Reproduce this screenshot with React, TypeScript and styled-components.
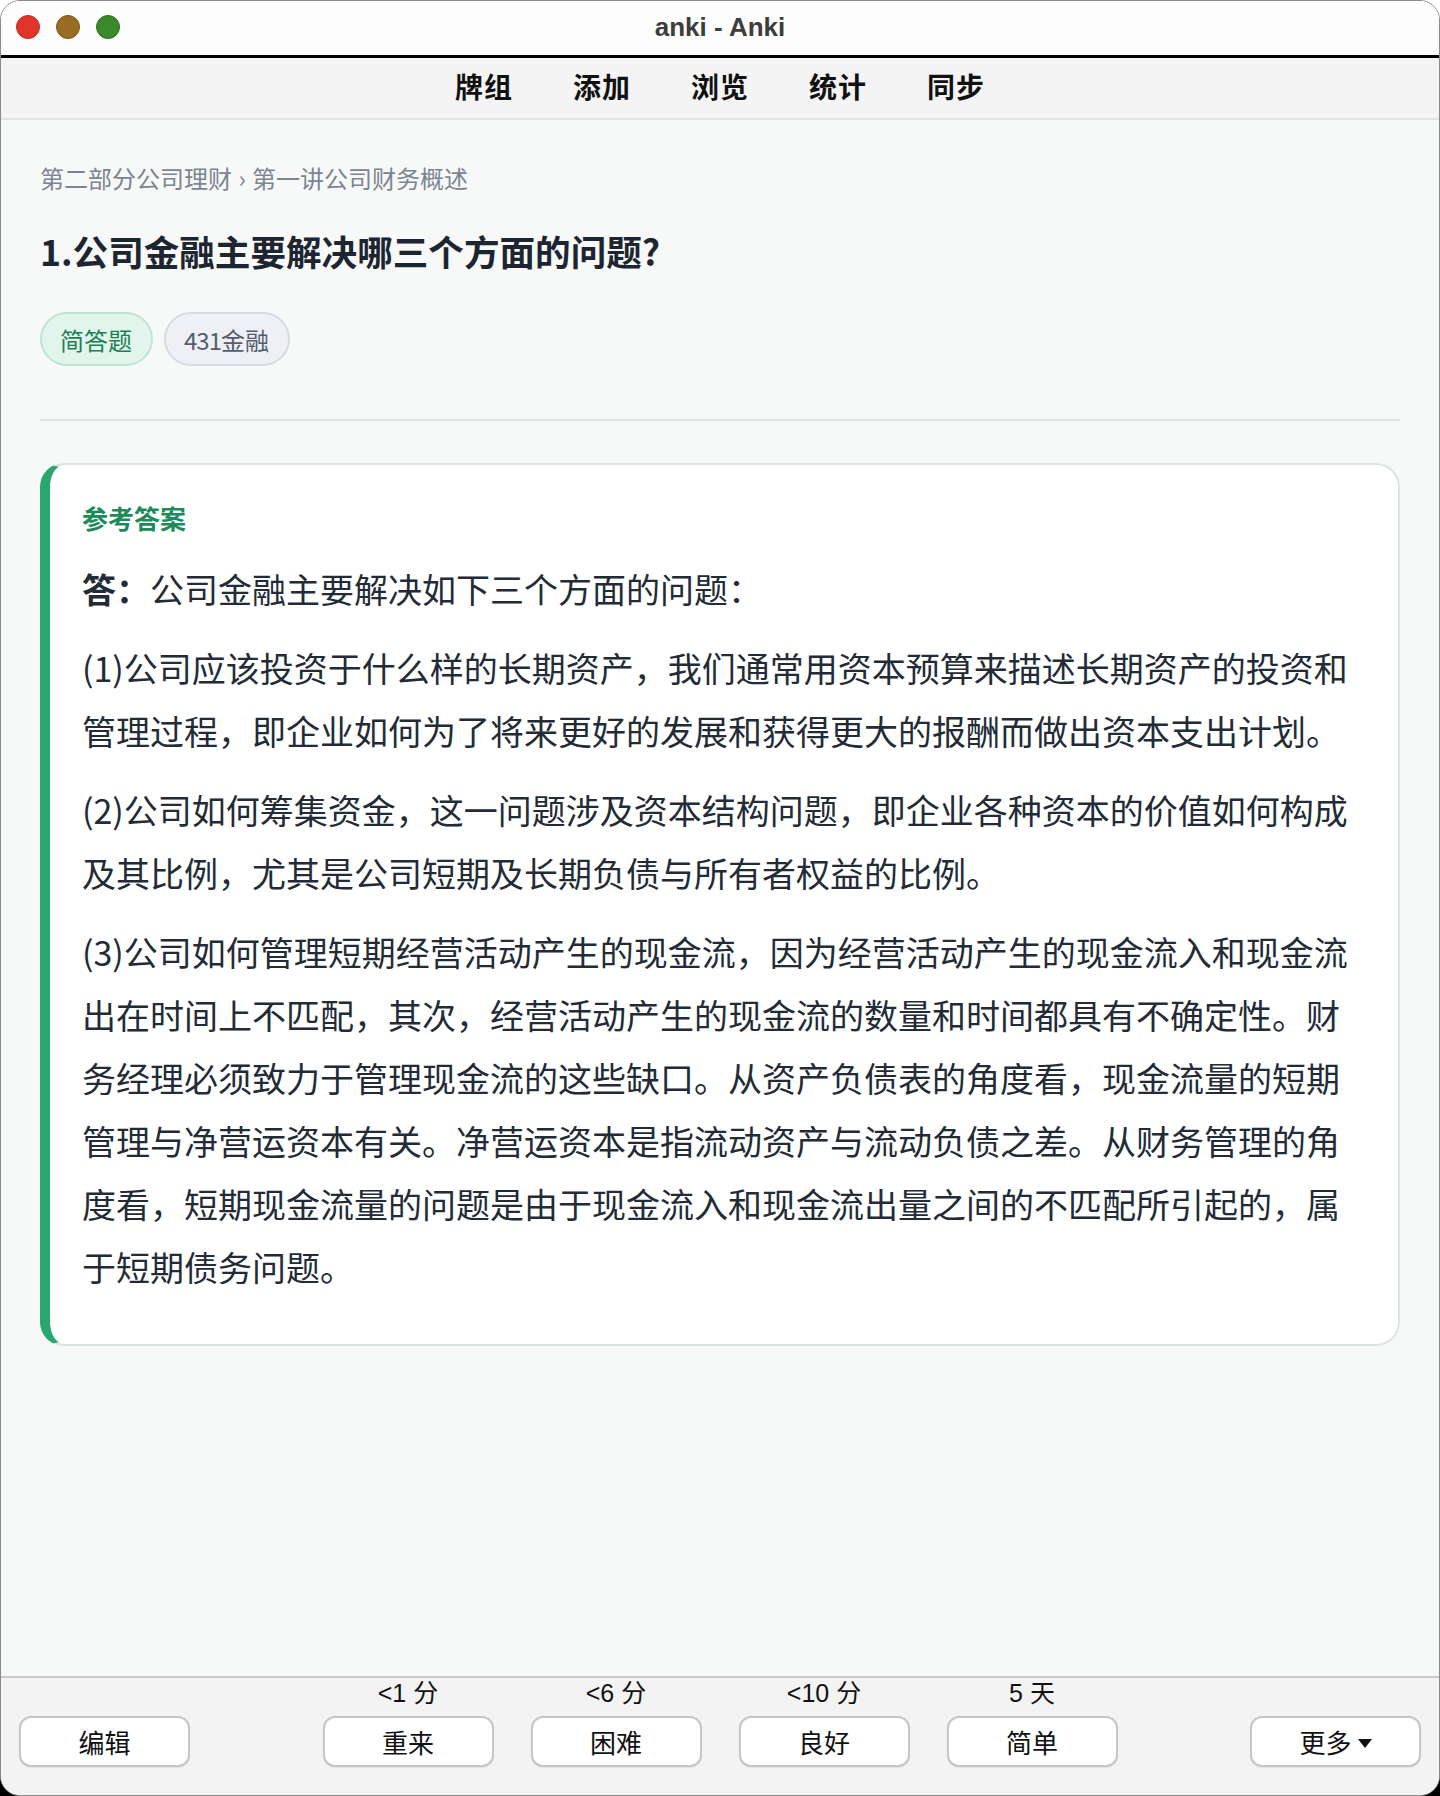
import React from 'react';
import styled, { createGlobalStyle } from 'styled-components';

const GlobalStyle = createGlobalStyle`
  html, body {
    margin: 0;
    padding: 0;
  }
  body {
    background: linear-gradient(to bottom, #ffffff 50%, #000000 50%);
    font-family: 'Noto Sans CJK SC', 'Noto Sans', sans-serif;
  }
  * {
    box-sizing: border-box;
  }
`;

const Window = styled.div`
  display: flex;
  flex-direction: column;
  height: 100vh;
  min-height: 1796px;
  border-radius: 20px;
  overflow: hidden;
  background: #f7f8f8;
  border: 1px solid #8a8a8a;
`;

const TitleBar = styled.div`
  position: relative;
  height: 57px;
  flex-shrink: 0;
  display: flex;
  align-items: center;
  justify-content: center;
  background: #fdfdfd;
  border-bottom: 3px solid #000;
`;

const Lights = styled.div`
  position: absolute;
  left: 15px;
  top: 14px;
  display: flex;
  gap: 16px;
`;

const Light = styled.span<{ $color: string; $edge: string }>`
  width: 24px;
  height: 24px;
  border-radius: 50%;
  background: ${(p) => p.$color};
  border: 1px solid ${(p) => p.$edge};
`;

const WindowTitle = styled.div`
  font-family: 'Liberation Sans', Arial, sans-serif;
  font-weight: 700;
  font-size: 26px;
  color: #3d3d3d;
  margin-top: -2px;
`;

const Toolbar = styled.nav`
  height: 62px;
  flex-shrink: 0;
  display: flex;
  align-items: center;
  justify-content: center;
  gap: 60px;
  padding-bottom: 4px;
  background: #f4f4f4;
  border-bottom: 2px solid #e3e3e3;
`;

const NavItem = styled.span`
  font-size: 28px;
  font-weight: 700;
  color: #111;
  letter-spacing: 1px;
`;

const Main = styled.main`
  flex: 1;
  padding: 40px 39px 0;
  display: flex;
  flex-direction: column;
`;

const Breadcrumb = styled.div`
  font-size: 24px;
  line-height: 36px;
  color: #7b8591;
  word-spacing: 1px;
`;

const Question = styled.h1`
  margin: 30px 0 0;
  font-size: 35.6px;
  line-height: 49px;
  font-weight: 700;
  color: #1d2530;
`;

const Tags = styled.div`
  display: flex;
  gap: 11px;
  margin-top: 37px;
`;

const Tag = styled.span<{ $green?: boolean }>`
  height: 54px;
  padding: 0 19px 0 18px;
  display: inline-flex;
  align-items: center;
  border-radius: 27px;
  font-size: 24px;
  background: ${(p) => (p.$green ? '#e1f5ec' : '#eef0f5')};
  border: 2px solid ${(p) => (p.$green ? '#bce5d2' : '#d6dbe3')};
  color: ${(p) => (p.$green ? '#1d7f53' : '#535d6b')};
`;

const TagDigits = styled.span`
  letter-spacing: -1px;
`;

const Divider = styled.hr`
  margin: 53px 0 0;
  border: none;
  height: 2px;
  background: #dde4e1;
`;

const AnswerCard = styled.section`
  margin-top: 42px;
  background: #ffffff;
  border: 2px solid #dde5e1;
  border-left: 10px solid #2aa66f;
  border-radius: 24px;
  padding: 35px 36px 46px 32px;
`;

const CardLabel = styled.div`
  font-size: 26px;
  line-height: 36px;
  font-weight: 700;
  color: #1e8a5a;
  margin-bottom: 21px;
`;

const Paragraph = styled.p`
  margin: 0 0 16px;
  font-size: 34px;
  line-height: 63px;
  color: #222b36;

  &:last-child {
    margin-bottom: 0;
  }

  b {
    font-weight: 700;
  }
`;

const BottomBar = styled.footer`
  height: 119px;
  flex-shrink: 0;
  display: flex;
  align-items: flex-end;
  padding: 0 18px 28px;
  background: #f3f3f3;
  border-top: 2px solid #c9c9c9;
`;

const AnswerGroup = styled.div`
  flex: 1;
  display: flex;
  justify-content: center;
  gap: 37px;
`;

const AnswerColumn = styled.div`
  display: flex;
  flex-direction: column;
  align-items: center;
  gap: 8px;
`;

const Interval = styled.div`
  height: 30px;
  line-height: 30px;
  font-family: 'Liberation Sans', 'Noto Sans CJK SC', sans-serif;
  font-size: 25px;
  color: #111;
`;

const Button = styled.button`
  width: 171px;
  height: 51px;
  background: #ffffff;
  border: 2px solid #c6c6c6;
  border-radius: 12px;
  box-shadow: 0 1px 1px rgba(0, 0, 0, 0.06);
  font-family: 'Noto Sans CJK SC', sans-serif;
  font-size: 26px;
  color: #111;
  display: inline-flex;
  align-items: center;
  justify-content: center;
  gap: 6px;
  padding: 0;
`;

const Caret = styled.span`
  width: 0;
  height: 0;
  border-left: 7px solid transparent;
  border-right: 7px solid transparent;
  border-top: 9px solid #111;
  margin-top: 4px;
`;

const intervals = [
  { time: '<1 分', label: '重来' },
  { time: '<6 分', label: '困难' },
  { time: '<10 分', label: '良好' },
  { time: '5 天', label: '简单' },
];

const App: React.FC = () => {
  return (
    <>
      <GlobalStyle />
      <Window>
        <TitleBar>
          <Lights>
            <Light $color="#e0352b" $edge="#c42a22" />
            <Light $color="#9a6b22" $edge="#7f561a" />
            <Light $color="#3a8a2b" $edge="#2d7021" />
          </Lights>
          <WindowTitle>anki - Anki</WindowTitle>
        </TitleBar>
        <Toolbar>
          <NavItem>牌组</NavItem>
          <NavItem>添加</NavItem>
          <NavItem>浏览</NavItem>
          <NavItem>统计</NavItem>
          <NavItem>同步</NavItem>
        </Toolbar>
        <Main>
          <Breadcrumb>第二部分公司理财 › 第一讲公司财务概述</Breadcrumb>
          <Question>1.公司金融主要解决哪三个方面的问题?</Question>
          <Tags>
            <Tag $green>简答题</Tag>
            <Tag>
              <TagDigits>431</TagDigits>金融
            </Tag>
          </Tags>
          <Divider />
          <AnswerCard>
            <CardLabel>参考答案</CardLabel>
            <Paragraph>
              <b>答：</b>公司金融主要解决如下三个方面的问题：
            </Paragraph>
            <Paragraph>
              (1)公司应该投资于什么样的长期资产，我们通常用资本预算来描述长期资产的投资和管理过程，即企业如何为了将来更好的发展和获得更大的报酬而做出资本支出计划。
            </Paragraph>
            <Paragraph>
              (2)公司如何筹集资金，这一问题涉及资本结构问题，即企业各种资本的价值如何构成及其比例，尤其是公司短期及长期负债与所有者权益的比例。
            </Paragraph>
            <Paragraph>
              (3)公司如何管理短期经营活动产生的现金流，因为经营活动产生的现金流入和现金流出在时间上不匹配，其次，经营活动产生的现金流的数量和时间都具有不确定性。财务经理必须致力于管理现金流的这些缺口。从资产负债表的角度看，现金流量的短期管理与净营运资本有关。净营运资本是指流动资产与流动负债之差。从财务管理的角度看，短期现金流量的问题是由于现金流入和现金流出量之间的不匹配所引起的，属于短期债务问题。
            </Paragraph>
          </AnswerCard>
        </Main>
        <BottomBar>
          <Button>编辑</Button>
          <AnswerGroup>
            {intervals.map((item) => (
              <AnswerColumn key={item.label}>
                <Interval>{item.time}</Interval>
                <Button>{item.label}</Button>
              </AnswerColumn>
            ))}
          </AnswerGroup>
          <Button>
            更多
            <Caret />
          </Button>
        </BottomBar>
      </Window>
    </>
  );
};

export default App;
